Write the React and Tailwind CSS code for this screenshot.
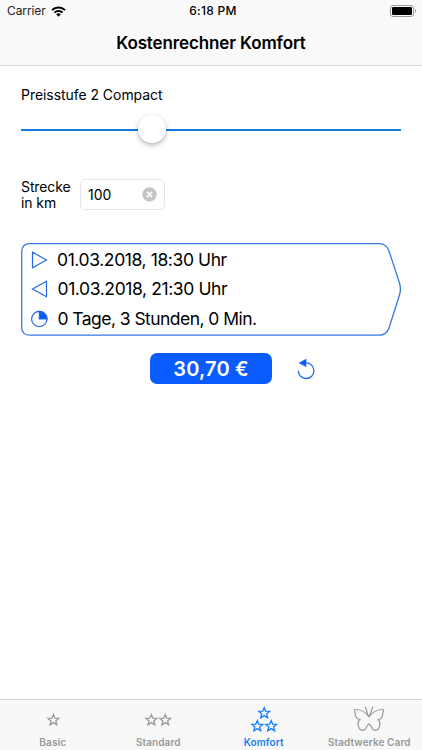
import React, { useState } from 'react';

const STAR = 'M0 -5.4L1.5 -1.8L5.4 -1.6L2.4 0.9L3.4 4.8L0 2.6L-3.4 4.8L-2.4 0.9L-5.4 -1.6L-1.5 -1.8Z';

const Stars = ({ points }) => (
  <svg width="40" height="30" viewBox="0 0 40 30" fill="none" stroke="currentColor" strokeWidth="1.3">
    {points.map(([x, y]) => (
      <path key={`${x}-${y}`} d={STAR} transform={`translate(${x} ${y})`} />
    ))}
  </svg>
);

const Butterfly = () => (
  <svg width="40" height="30" viewBox="0 0 40 30" fill="none" stroke="currentColor" strokeWidth="1.2" strokeLinejoin="round" strokeLinecap="round">
    <path d="M20 13.800C17 9.500 12 6.800 7 6.500C5.200 6.400 5.200 7.500 5.800 9C6.400 10.500 6 12 7 14C7.700 15.800 9 16.400 11 16.700C9 18.300 8.500 20 9.300 22.500C9.700 24 9.800 25 10.700 26C12 27.300 14.300 27.500 16 26.500C17.300 25.500 17.500 22 20 20.700C22.500 22 22.700 25.500 24 26.500C25.700 27.500 28 27.300 29.300 26C30.200 25 30.300 24 30.700 22.500C31.500 20 31 18.300 29 16.700C31 16.400 32.300 15.800 33 14C34 12 33.600 10.500 34.200 9C34.800 7.500 34.800 6.400 33 6.500C28 6.800 23 9.500 20 13.800Z" />
    <path d="M16.300 4L19.400 13M23.700 4L20.600 13" />
  </svg>
);

const tabs = [
  { label: 'Basic', icon: <Stars points={[[20.400, 17]]} /> },
  { label: 'Standard', icon: <Stars points={[[13.400, 17], [27.200, 17]]} /> },
  { label: 'Komfort', icon: <Stars points={[[20.200, 10], [13.300, 23], [27.200, 23]]} /> },
  { label: 'Stadtwerke Card', icon: <Butterfly /> },
];

const StatusBar = () => (
  <div className="grid h-[22px] grid-cols-3 items-center pl-[7px] pr-[5px] text-[12px]">
    <div className="flex items-center gap-[5px]">
      <span className="text-[#222] tracking-[-0.100px]">Carrier</span>
      <svg width="15" height="11" viewBox="0 0 15 11" fill="none" stroke="#000" strokeWidth="2">
        <path d="M1 4.100A9.300 9.300 0 0 1 14 4.100" />
        <path d="M3.400 6.600A5.800 5.800 0 0 1 11.600 6.600" />
        <path d="M7.500 10.700L5.200 8.300A3.300 3.300 0 0 1 9.800 8.300Z" fill="#000" stroke="none" />
      </svg>
    </div>
    <span className="pl-[2px] text-center font-medium tracking-[0.300px]">6:18 PM</span>
    <svg className="justify-self-end" width="27" height="12" viewBox="0 0 27 12">
      <rect x="0.500" y="0.500" width="23" height="11" rx="2.600" fill="none" stroke="#999" />
      <rect x="2" y="2" width="20" height="8" rx="1.300" />
      <path d="M25 4C26.500 4.500 26.500 7.500 25 8Z" fill="#999" />
    </svg>
  </div>
);

const TripBox = () => (
  <div className="relative mt-[32px] h-[93px] w-[380px] pl-[10px] pt-[2px] text-[17.500px]">
    <svg className="absolute left-0 top-0" width="380" height="93" viewBox="0 0 380 93" fill="none" stroke="#3a78e6" strokeWidth="1.300">
      <path d="M9 0.700H358Q365.500 0.700 368 8L378.500 40Q380.300 46 378.500 52L368 85Q365.500 92.200 358 92.200H9Q0.700 92.200 0.700 84V9Q0.700 0.700 9 0.700Z" />
    </svg>
    <div className="flex h-[29.500px] items-center gap-[9px]">
      <svg width="17" height="18" viewBox="0 0 17 18" fill="none" stroke="#2468e8" strokeWidth="1.200">
        <path d="M1.500 1.200V16.800L15.500 9Z" />
      </svg>
      <span className="tracking-[-0.400px]">01.03.2018, 18:30 Uhr</span>
    </div>
    <div className="flex h-[29.500px] items-center gap-[9.500px]">
      <svg width="17" height="18" viewBox="0 0 17 18" fill="none" stroke="#2468e8" strokeWidth="1.200">
        <path d="M15.500 1.200V16.800L1.500 9Z" />
      </svg>
      <span className="tracking-[-0.400px]">01.03.2018, 21:30 Uhr</span>
    </div>
    <div className="flex h-[29.500px] items-center gap-[9.500px]">
      <svg width="17" height="18" viewBox="0 0 17 18" fill="none" stroke="#2468e8" strokeWidth="1.200">
        <circle cx="8.300" cy="9" r="7.700" />
        <path d="M8.300 9V1.300A7.700 7.700 0 0 1 16 9Z" fill="#0a5cff" />
      </svg>
      <span className="tracking-[-0.550px]">0 Tage, 3 Stunden, 0 Min.</span>
    </div>
  </div>
);

const App = () => {
  const [active, setActive] = useState('Komfort');
  const [distance, setDistance] = useState('100');

  return (
    <div className="flex h-[750px] w-[422px] flex-col bg-white font-[Inter,sans-serif] text-black">
      <header className="h-[66px] border-b border-[#d8d8d8] bg-[#f9f9f9]">
        <StatusBar />
        <h1 className="mt-[9px] text-center text-[17px] font-semibold leading-[24px] tracking-[-0.120px]">Kostenrechner Komfort</h1>
      </header>

      <main className="flex-1 px-[21px] pt-[19px]">
        <p className="text-[14px] leading-[20px] tracking-[-0.050px]">Preisstufe 2 Compact</p>
        <div className="mt-[10px] flex h-[29px] items-center">
          <div className="h-[2px] w-[117px] bg-[#167bdf]" />
          <div className="mb-[2px] h-[28px] w-[28px] rounded-full bg-white shadow-[0_2px_5px_rgba(0,0,0,0.3)]" />
          <div className="h-[2px] flex-1 bg-[#167bdf]" />
        </div>

        <div className="mt-[34px] flex h-[33px] items-center">
          <p className="w-[59px] pt-px text-[14px] leading-[16.500px] tracking-[-0.100px]">Strecke<br />in km</p>
          <div className="flex h-[31px] w-[85px] items-center rounded-[5px] border border-[#e6e6e6] pl-[7px] pr-[7px]">
            <input
              className="mb-px w-full min-w-0 text-[14px] outline-none"
              value={distance}
              onChange={e => setDistance(e.target.value)}
            />
            <button onClick={() => setDistance('')} className="shrink-0">
              <svg width="15" height="15" viewBox="0 0 15 15">
                <circle cx="7.500" cy="7.500" r="7.200" fill="#c4c4c6" />
                <path d="M4.900 4.900L10.100 10.100M10.100 4.900L4.900 10.100" stroke="#fff" strokeWidth="1.500" />
              </svg>
            </button>
          </div>
        </div>

        <TripBox />

        <div className="mt-[17px] flex items-center pl-[129px]">
          <div className="flex h-[31px] w-[122px] items-center justify-center rounded-[7px] bg-[#0a5cff] text-[20px] font-semibold tracking-[0.150px] text-white">
            30,70 €
          </div>
          <button className="ml-[25px]">
            <svg width="19" height="22" viewBox="0 0 19 22" fill="none">
              <path d="M1.300 12.700A7.800 7.800 0 1 0 9 4.900" stroke="#2468e8" strokeWidth="1.300" />
              <path d="M1.500 4.900L9.300 0.700V9Z" fill="#0a5cff" />
            </svg>
          </button>
        </div>
      </main>

      <nav className="grid h-[51px] grid-cols-4 border-t border-[#d5d5d5] bg-[#f8f8f8]">
        {tabs.map(tab => (
          <button
            key={tab.label}
            onClick={() => setActive(tab.label)}
            className={`flex flex-col items-center pt-[3px] text-[10px] font-semibold ${active === tab.label ? 'text-[#147efb]' : 'text-[#999]'}`}
          >
            {tab.icon}
            <span className="mt-[2px] whitespace-nowrap leading-[14px] tracking-[0.100px]">{tab.label}</span>
          </button>
        ))}
      </nav>
    </div>
  );
};

export default App;
